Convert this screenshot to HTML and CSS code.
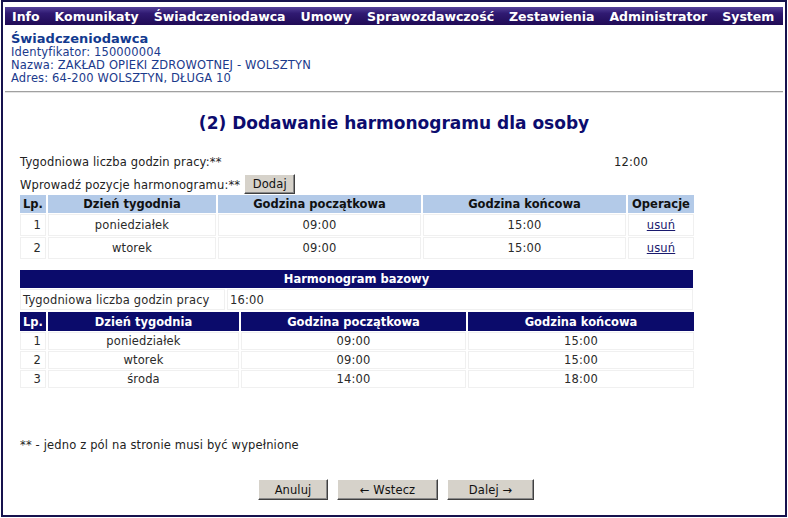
FILE: index.html
```html
<!DOCTYPE html>
<html lang="pl">
<head>
<meta charset="utf-8">
<title>Dodawanie harmonogramu dla osoby</title>
<link rel="stylesheet" href="styles.css">
</head>
<body>
<div class="frame">
  <nav class="menu">
    <span>Info</span>
    <span>Komunikaty</span>
    <span>Świadczeniodawca</span>
    <span>Umowy</span>
    <span>Sprawozdawczość</span>
    <span>Zestawienia</span>
    <span>Administrator</span>
    <span>System</span>
  </nav>
  <div class="provider">
    <div class="provider-title">Świadczeniodawca</div>
    <div>Identyfikator: 150000004</div>
    <div>Nazwa: ZAKŁAD OPIEKI ZDROWOTNEJ - WOLSZTYN</div>
    <div>Adres: 64-200 WOLSZTYN, DŁUGA 10</div>
  </div>
  <div class="rule"></div>
  <h1 class="title">(2) Dodawanie harmonogramu dla osoby</h1>
  <div class="content">
    <div class="field-row">
      <span class="field-label">Tygodniowa liczba godzin pracy:**</span>
      <span>12:00</span>
    </div>
    <div class="field-row add-row">
      <span>Wprowadź pozycje harmonogramu:**</span>
      <button class="btn btn-add">Dodaj</button>
    </div>
    <table class="grid light">
      <colgroup>
        <col class="c-lp"><col class="c1-day"><col class="c1-time"><col class="c1-time"><col class="c1-op">
      </colgroup>
      <thead>
        <tr><th>Lp.</th><th>Dzień tygodnia</th><th>Godzina początkowa</th><th>Godzina końcowa</th><th>Operacje</th></tr>
      </thead>
      <tbody>
        <tr><td class="num">1</td><td>poniedziałek</td><td>09:00</td><td>15:00</td><td><a href="#">usuń</a></td></tr>
        <tr><td class="num">2</td><td>wtorek</td><td>09:00</td><td>15:00</td><td><a href="#">usuń</a></td></tr>
      </tbody>
    </table>

    <div class="base">
      <div class="base-title">Harmonogram bazowy</div>
      <table class="grid info">
        <tr><td class="info-label">Tygodniowa liczba godzin pracy</td><td class="info-val">16:00</td></tr>
      </table>
      <table class="grid dark">
        <colgroup>
          <col class="c-lp"><col class="c2-day"><col class="c2-start"><col class="c2-end">
        </colgroup>
        <thead>
          <tr><th>Lp.</th><th>Dzień tygodnia</th><th>Godzina początkowa</th><th>Godzina końcowa</th></tr>
        </thead>
        <tbody>
          <tr><td class="num">1</td><td>poniedziałek</td><td>09:00</td><td>15:00</td></tr>
          <tr><td class="num">2</td><td>wtorek</td><td>09:00</td><td>15:00</td></tr>
          <tr><td class="num">3</td><td>środa</td><td>14:00</td><td>18:00</td></tr>
        </tbody>
      </table>
    </div>

    <p class="note">** - jedno z pól na stronie musi być wypełnione</p>
  </div>
  <div class="buttons">
    <button class="btn btn-cancel">Anuluj</button>
    <button class="btn btn-back">← Wstecz</button>
    <button class="btn btn-next">Dalej →</button>
  </div>
</div>
</body>
</html>
```
FILE: styles.css
```css
* { box-sizing: border-box; }

html, body {
  margin: 0;
  padding: 0;
  background: #ffffff;
}

body {
  font-family: "DejaVu Sans", Verdana, sans-serif;
  font-size: 11.5px;
  letter-spacing: 0.15px;
  color: #222222;
}

.frame {
  margin: 0 1px;
  height: 517px;
  border: 2px solid #16124e;
  padding: 5px 2px 0 2px;
}

.menu {
  display: flex;
  gap: 15px;
  height: 18px;
  align-items: center;
  padding-left: 7px;
  background: linear-gradient(to bottom, #54429a 0%, #301a72 35%, #200b55 100%);
  color: #ffffff;
  font-size: 12.5px;
  letter-spacing: 0;
  font-weight: bold;
  white-space: nowrap;
}

.provider {
  margin-top: 6px;
  padding-left: 6px;
  color: #1b3a8c;
  line-height: 13px;
}

.provider-title {
  font-size: 13px;
  letter-spacing: 0;
  font-weight: bold;
  line-height: 15px;
  color: #123a8f;
}

.rule {
  margin-top: 6px;
  height: 2px;
  border-top: 1px solid #a0a0a0;
  border-bottom: 1px solid #e4e4e4;
}

.title {
  margin: 20px 0 0 0;
  text-align: center;
  font-size: 17px;
  letter-spacing: 0;
  line-height: 20px;
  font-weight: bold;
  color: #0c0c6e;
}

.content {
  padding-left: 15px;
}

.field-row {
  display: flex;
  align-items: center;
  margin-top: 22px;
  line-height: 14px;
}

.field-label {
  width: 594px;
}

.add-row {
  margin-top: 5px;
  height: 20px;
  gap: 4px;
}

.add-row span {
  padding-top: 2px;
}

.btn {
  font-family: "DejaVu Sans", Verdana, sans-serif;
  font-size: 11.5px;
  letter-spacing: 0.1px;
  color: #111111;
  background: #d6d2ca;
  border: 1px solid;
  border-color: #ffffff #404040 #404040 #ffffff;
  box-shadow: inset -1px -1px 0 #8a8a8a;
  padding: 0;
  height: 21px;
}

.btn-add { width: 51px; height: 20px; }

.grid {
  border-collapse: separate;
  border-spacing: 2px 1px;
  margin-left: -2px;
  table-layout: fixed;
  width: 677px;
}

.grid th {
  font-weight: bold;
  font-size: 11.5px;
  letter-spacing: 0;
  height: 18px;
  padding: 0;
  text-align: center;
}

.grid td {
  padding: 0 4px;
  text-align: center;
  background: #ffffff;
  border: 1px solid #f0f0f0;
  color: #2a2a2a;
}

.grid td.num {
  text-align: right;
}

.light th {
  background: #b3cae8;
  color: #111111;
}

.light td {
  height: 22px;
}

.light a {
  color: #1a1a6e;
}

.c-lp { width: 26px; }
.c1-day { width: 168px; }
.c1-time { width: 203px; }
.c1-op { width: 66px; }

.base {
  margin-top: 10px;
}

.base-title {
  width: 673px;
  height: 18px;
  background: #0b0b6b;
  color: #ffffff;
  font-weight: bold;
  letter-spacing: 0;
  text-align: center;
  line-height: 18px;
}

.info td {
  height: 21px;
  text-align: left;
  padding: 0 2px;
}

.info .info-label { width: 205px; }

.dark th {
  background: #0b0b6b;
  color: #ffffff;
  height: 19px;
}

.dark td {
  height: 18px;
}

.c2-day { width: 191px; }
.c2-start { width: 225px; }
.c2-end { width: 226px; }

.note {
  margin: 49px 0 0 0;
  line-height: 14px;
}

.buttons {
  display: flex;
  justify-content: center;
  gap: 9px;
  margin-top: 27px;
  padding-left: 4px;
}

.btn-cancel { width: 70px; }
.btn-back { width: 101px; }
.btn-next { width: 87px; }
```
